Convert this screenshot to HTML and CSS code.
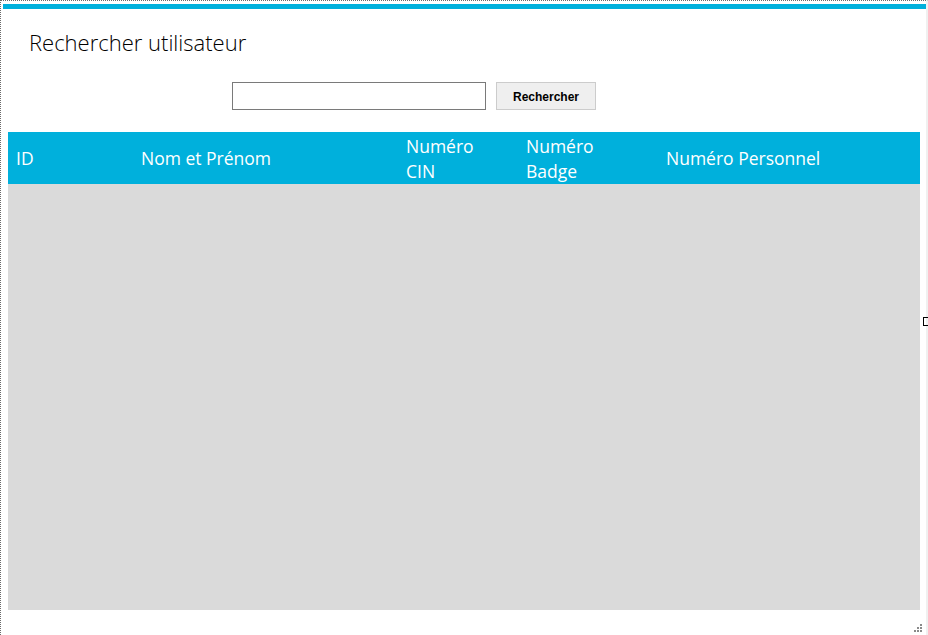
FILE: index.html
```html
<!DOCTYPE html>
<html lang="fr">
<head>
<meta charset="utf-8">
<title>Rechercher utilisateur</title>
<link rel="stylesheet" href="styles.css">
</head>
<body>
<div class="frame">
  <div class="accent"></div>
  <h1 class="title">Rechercher utilisateur</h1>
  <div class="search">
    <input class="search-input" type="text">
    <button class="search-btn" type="button">Rechercher</button>
  </div>
  <div class="grid">
    <div class="grid-head">
      <div class="col col-id">ID</div>
      <div class="col col-nom">Nom et Prénom</div>
      <div class="col col-cin">Numéro<br>CIN</div>
      <div class="col col-badge">Numéro<br>Badge</div>
      <div class="col col-pers">Numéro Personnel</div>
    </div>
    <div class="grid-body"></div>
  </div>
  <span class="side-handle"></span>
  <span class="grip">
    <i class="d d1"></i><i class="d d2"></i><i class="d d3"></i>
    <i class="d d4"></i><i class="d d5"></i><i class="d d6"></i>
  </span>
</div>
</body>
</html>
```
FILE: styles.css
```css
html, body {
  margin: 0;
  padding: 0;
  background: #ffffff;
}
.frame {
  position: relative;
  box-sizing: border-box;
  width: 928px;
  height: 635px;
  border-left: 1px dotted #6a6a6a;
  border-top: 1px dotted #6a6a6a;
  border-right: 2px solid #f0f0f0;
  padding: 3px 0 0 2px;
  display: flex;
  flex-direction: column;
  font-family: "Open Sans", "Noto Sans", sans-serif;
}
.accent {
  height: 5px;
  width: 923px;
  background: #00b0dc;
}
.title {
  margin: 19px 0 0 26px;
  font-weight: 300;
  font-size: 22px;
  line-height: 28px;
  color: #000000;
}
.search {
  display: flex;
  gap: 10px;
  margin: 26px 0 0 229px;
}
.search-input {
  box-sizing: border-box;
  width: 254px;
  height: 28px;
  border: 1px solid #7a7a7a;
  background: #fff;
  margin: 0;
  padding: 0 4px;
}
.search-btn {
  box-sizing: border-box;
  width: 100px;
  height: 28px;
  margin: 0;
  padding: 1px 0 0;
  border: 1px solid #cccccc;
  background: #efefef;
  font-family: "Liberation Sans", Arial, sans-serif;
  font-weight: bold;
  font-size: 12px;
  color: #000;
}
.grid {
  margin: 22px 0 0 5px;
  width: 912px;
  display: flex;
  flex-direction: column;
}
.grid-head {
  height: 52px;
  background: #00b0dc;
  display: flex;
  align-items: center;
  color: #ffffff;
  font-size: 17.5px;
  line-height: 25px;
  padding-top: 1px;
  box-sizing: border-box;
}
.col {
  box-sizing: border-box;
  padding-left: 8px;
}
.col-id { width: 125px; }
.col-nom { width: 265px; }
.col-cin { width: 120px; }
.col-badge { width: 140px; }
.col-pers { flex: 1; }
.grid-body {
  height: 426px;
  background: #dadada;
}
.side-handle {
  position: absolute;
  left: 922px;
  top: 316px;
  width: 4px;
  height: 7px;
  border: 1px solid #000;
  border-right: none;
}
.grip {
  position: absolute;
  left: 910px;
  top: 622px;
  width: 12px;
  height: 12px;
}
.d {
  position: absolute;
  width: 2px;
  height: 2px;
  background: #8a8a8a;
}
.d1 { left: 9px; top: 1px; }
.d2 { left: 6px; top: 4px; }
.d3 { left: 9px; top: 4px; }
.d4 { left: 3px; top: 7px; }
.d5 { left: 6px; top: 7px; }
.d6 { left: 9px; top: 7px; }
```
